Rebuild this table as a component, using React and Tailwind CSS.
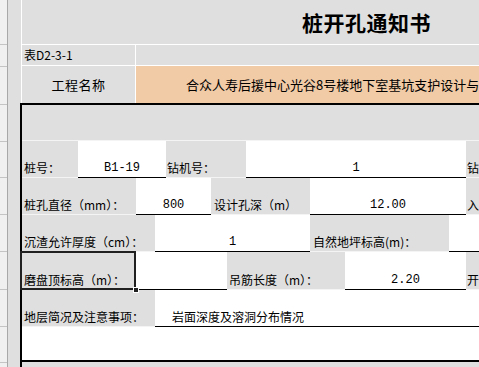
import React from 'react';

// row header strip: heights of each sheet row (incl. 1px separator)
const rowHeights = [45, 22, 38, 37, 36, 37, 37, 38, 37, 36, 40];

const cjk = "font-['Noto_Sans_CJK_SC','Liberation_Sans',sans-serif]";

const Label = ({ className = '', children }) => (
  <div
    className={`shrink-0 h-full flex items-end pl-[2px] pb-[3px] bg-[#dfdfdf] border-b border-[#f4f4f4] text-[12px] leading-none whitespace-nowrap overflow-hidden text-black ${className}`}
  >
    {children}
  </div>
);

const Value = ({ className = '', children }) => (
  <div
    className={`shrink-0 h-full flex items-end justify-center pb-[3px] bg-white border-b border-black text-[12px] leading-none whitespace-nowrap text-black font-['Liberation_Mono',monospace] ${className}`}
  >
    {children}
  </div>
);

export default function App() {
  return (
    <div className={`w-[479px] h-[367px] overflow-hidden flex bg-[#dfdfdf] ${cjk}`}>
      {/* row numbers column */}
      <div className="w-[8px] shrink-0 flex flex-col bg-[#f0f0f0] border-r border-[#a8a8a8]">
        {rowHeights.map((h, i) => (
          <div key={i} className="shrink-0 border-b border-[#c4c4c4]" style={{ height: h }} />
        ))}
      </div>

      {/* column A */}
      <div className="w-[12px] shrink-0 bg-[#dfdfdf]" />

      {/* sheet */}
      <div className="flex-1 flex flex-col min-w-0">
        <div className="ml-px border-l border-white flex flex-col">
          <div className="h-[45px] flex items-center pl-[280px] border-b border-white">
            <span className="text-[21px] font-bold leading-none tracking-[0.5px] whitespace-nowrap">桩开孔通知书</span>
          </div>
          <div className="h-[21px] flex border-b border-white">
            <div className="w-[114px] shrink-0 flex items-center pl-[2px] border-r border-white text-[12px] leading-none">
              表D2-3-1
            </div>
            <div className="flex-1" />
          </div>
          <div className="h-[37px] flex">
            <div className="w-[114px] shrink-0 flex items-center justify-center border-r border-white text-[13px] tracking-[0.5px] leading-none">
              工程名称
            </div>
            <div className="flex-1 bg-[#f1caa6] flex items-center pl-[50px] text-[13px] leading-none whitespace-nowrap overflow-hidden">
              合众人寿后援中心光谷8号楼地下室基坑支护设计与
            </div>
          </div>
        </div>

        {/* notice table */}
        <div className="flex-1 flex flex-col border-t-2 border-l-2 border-black">
          <div className="h-[36px] shrink-0 border-b border-[#f4f4f4]" />

          <div className="h-[37px] shrink-0 flex">
            <Label className="w-[56px]">桩号：</Label>
            <Value className="w-[88px]">B1-19</Value>
            <Label className="w-[80px] pl-px">钻机号：</Label>
            <Value className="w-[220px]">1</Value>
            <Label className="flex-1 pl-px">钻</Label>
          </div>

          <div className="h-[37px] shrink-0 flex">
            <Label className="w-[114px]">桩孔直径（mm）：</Label>
            <Value className="w-[75px]">800</Value>
            <Label className="w-[99px] pl-[3px]">设计孔深（m）</Label>
            <Value className="w-[156px]">12.00</Value>
            <Label className="flex-1 pl-px">入</Label>
          </div>

          <div className="h-[37px] shrink-0 flex">
            <Label className="w-[133px]">沉渣允许厚度（cm）：</Label>
            <Value className="w-[155px]">1</Value>
            <Label className="w-[139px] pl-[3px]">自然地坪标高(m)：</Label>
            <Value className="flex-1" />
          </div>

          <div className="h-[38px] shrink-0 flex">
            <div className="relative w-[114px] shrink-0 h-full">
              <Label className="w-full">磨盘顶标高（m）：</Label>
              <div className="absolute -left-[2px] -top-px right-0 bottom-0 border-2 border-[#202020] pointer-events-none" />
              <div className="absolute -right-[3px] -bottom-[3px] w-[6px] h-[6px] bg-[#202020] border border-white" />
            </div>
            <Value className="w-[91px]" />
            <Label className="w-[118px]">吊筋长度（m）：</Label>
            <Value className="w-[121px]">2.20</Value>
            <Label className="flex-1 pl-px">开</Label>
          </div>

          <div className="h-[37px] shrink-0 flex">
            <Label className="w-[133px]">地层简况及注意事项：</Label>
            <div className="flex-1 h-full flex items-end pl-[17px] pb-[3px] bg-white border-b border-black text-[12px] leading-none whitespace-nowrap">
              岩面深度及溶洞分布情况
            </div>
          </div>

          <div className="h-[35px] shrink-0 bg-white border-b-2 border-black" />
          <div className="flex-1 bg-[#dfdfdf]" />
        </div>
      </div>
    </div>
  );
}
